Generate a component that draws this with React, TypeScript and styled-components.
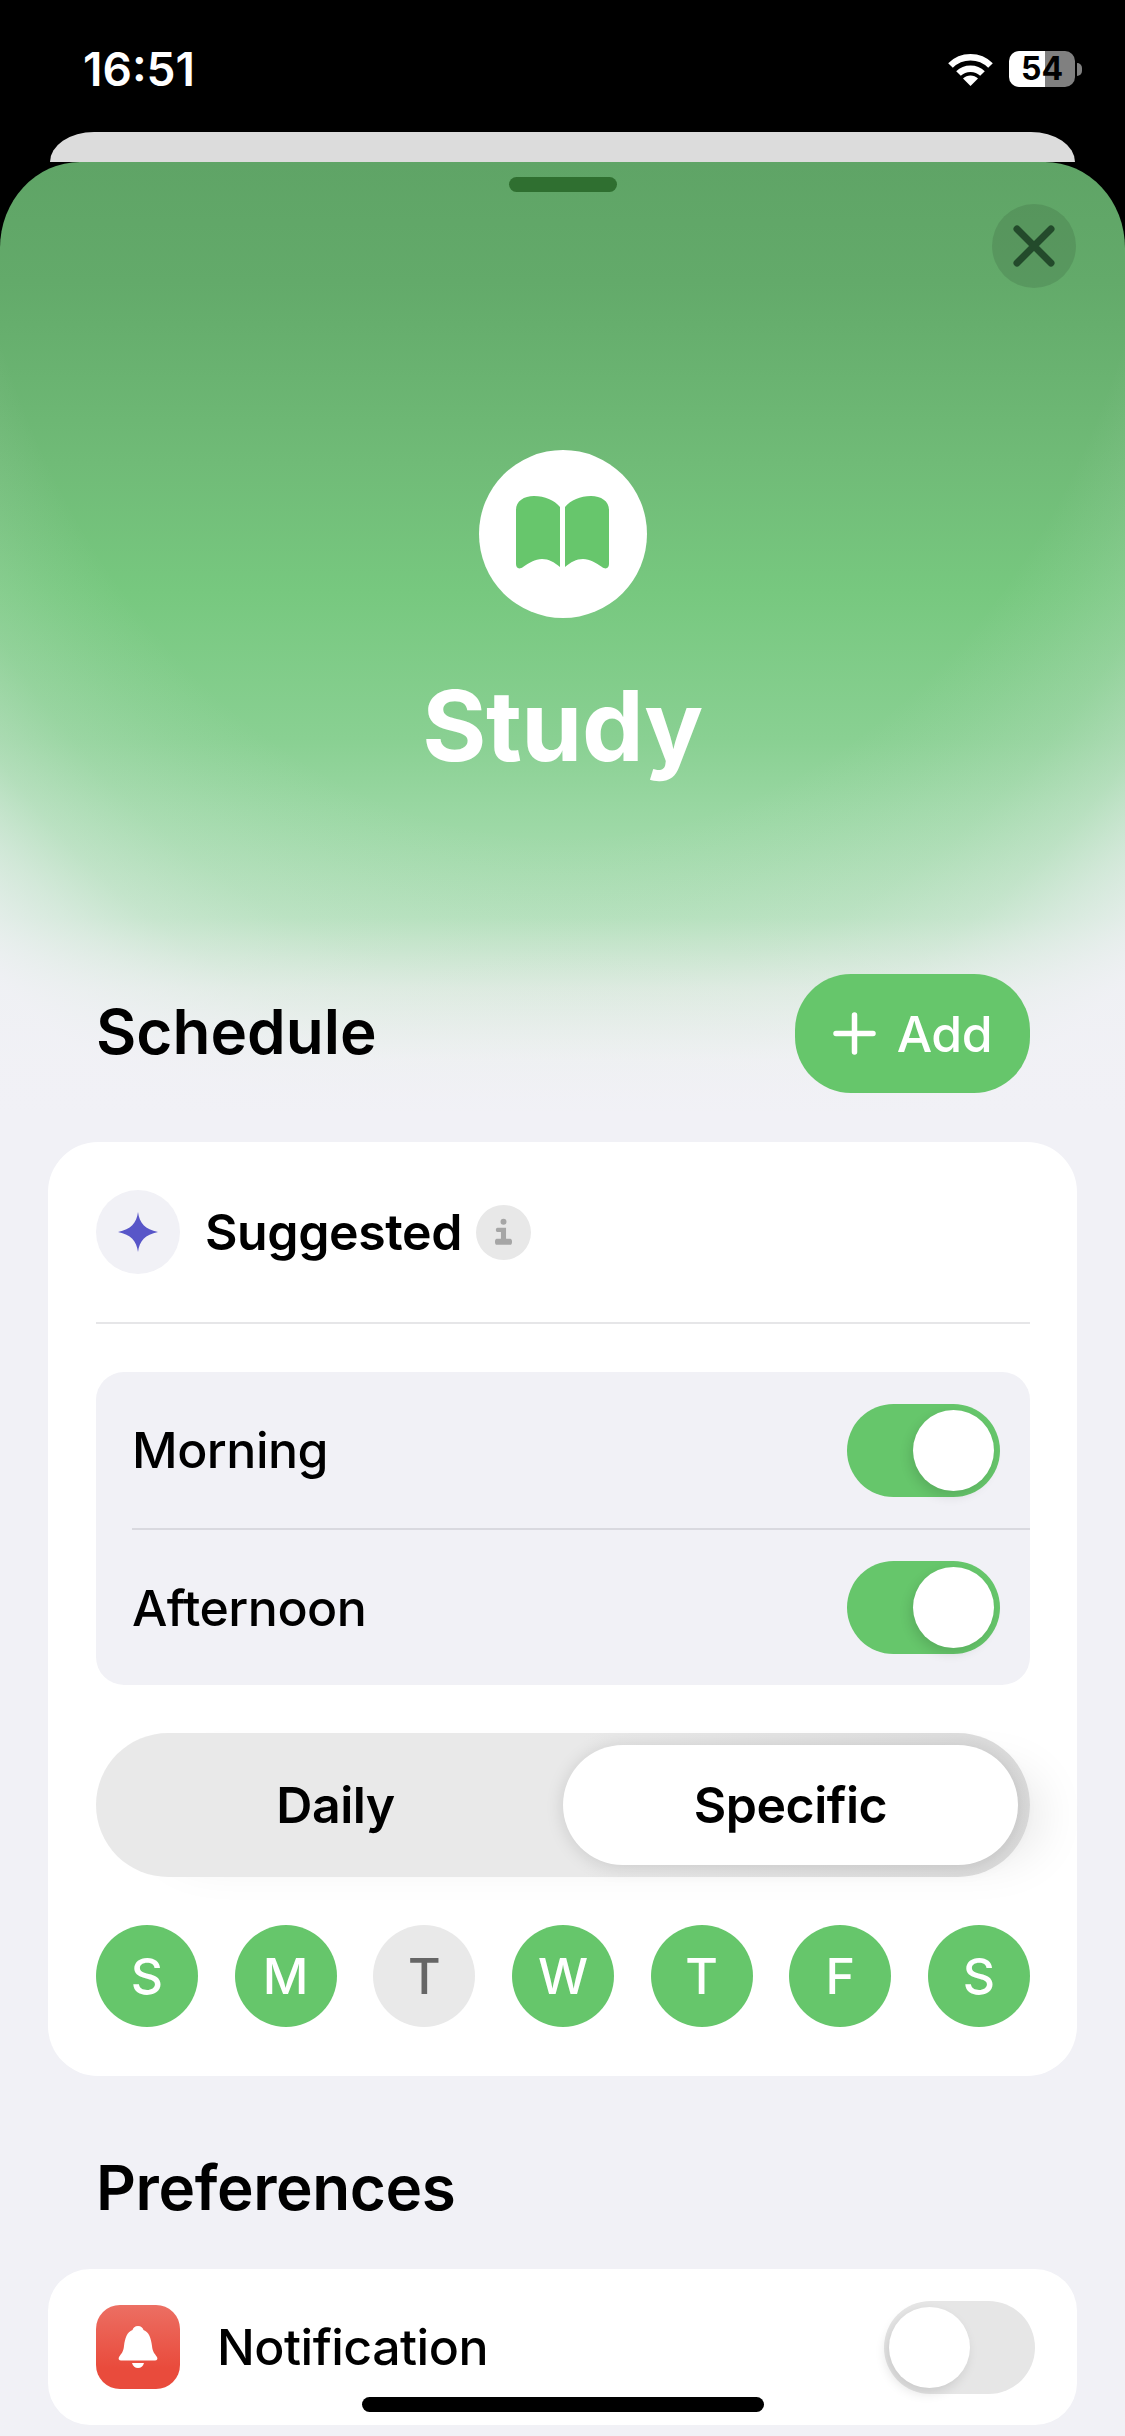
import * as React from "react";
import styled, { createGlobalStyle } from "styled-components";

const Global = createGlobalStyle`
	html, body {
		margin: 0;
		padding: 0;
		background: #000;
	}
	* {
		box-sizing: border-box;
	}
`;

const Phone = styled.div`
	position: relative;
	width: 1125px;
	height: 2436px;
	overflow: hidden;
	background: #000;
	font-family: Inter, "Liberation Sans", sans-serif;
	color: #000;
`;

const StatusBar = styled.div`
	height: 132px;
	padding: 51px 43px 0 83px;
	display: flex;
	justify-content: space-between;
	align-items: flex-start;
	color: #fff;
`;
const Time = styled.span`
	font-size: 46px;
	line-height: 36px;
	font-weight: 600;
`;
const StatusIcons = styled.div`
	display: flex;
	align-items: center;
	gap: 16px;
`;
const Battery = styled.div`
	display: flex;
	align-items: center;
	gap: 2px;
`;
const BatteryBody = styled.div`
	width: 66px;
	height: 36px;
	border-radius: 10px;
	background: linear-gradient(90deg, #fff 55%, #808080 55%);
	color: #000;
	font-size: 32px;
	line-height: 36px;
	font-weight: 700;
	text-align: center;
`;
const BatteryNub = styled.div`
	width: 5px;
	height: 13px;
	border-radius: 0 6px 6px 0;
	background: #808080;
`;

const BackSheet = styled.div`
	height: 30px;
	margin: 0 50px;
	background: #dcdcdc;
	border-radius: 50px 50px 0 0 / 34px 34px 0 0;
`;

const Sheet = styled.div`
	height: 2274px;
	display: flex;
	flex-direction: column;
	border-radius: 80px 80px 0 0 / 86px 86px 0 0;
	background:
		radial-gradient(
			ellipse 910px 1170px at 50% -100px,
			transparent 66%,
			rgba(241, 241, 246, 0.07) 72%,
			rgba(241, 241, 246, 0.17) 79%,
			rgba(241, 241, 246, 0.35) 86%,
			rgba(241, 241, 246, 0.58) 91%,
			rgba(241, 241, 246, 0.78) 96%,
			rgba(241, 241, 246, 0.92) 100%
		),
		linear-gradient(
			180deg,
			#5fa466 0px,
			#63aa6a 120px,
			#70bb77 300px,
			#77c87f 430px,
			#89d092 576px,
			#99d7a2 648px,
			#b0dfb8 755px,
			#d8e9db 826px,
			#edf0f0 898px,
			#f1f1f6 950px
		);
`;
const Handle = styled.div`
	width: 108px;
	height: 15px;
	margin-top: 15px;
	align-self: center;
	border-radius: 8px;
	background: #2f6f30;
`;
const CloseButton = styled.div`
	width: 84px;
	height: 84px;
	margin: 12px 49px 0 0;
	align-self: flex-end;
	border-radius: 50%;
	background: rgba(0, 0, 0, 0.1);
	display: flex;
	align-items: center;
	justify-content: center;
`;
const BookBadge = styled.div`
	width: 168px;
	height: 168px;
	margin-top: 162px;
	align-self: center;
	border-radius: 50%;
	background: #fff;
	display: flex;
	align-items: center;
	justify-content: center;
	padding-bottom: 3px;
`;
const Title = styled.h1`
	margin: 53px 0 0;
	font-size: 98px;
	line-height: 110px;
	font-weight: 700;
	letter-spacing: -0.5px;
	color: #fff;
	text-align: center;
`;

const SectionHeader = styled.div`
	margin: 193px 95px 49px 96px;
	display: flex;
	justify-content: space-between;
	align-items: center;
`;
const SectionTitle = styled.h2`
	margin: 0 0 3px;
	font-size: 62px;
	line-height: 72px;
	font-weight: 600;
`;
const PreferencesTitle = styled(SectionTitle)`
	margin: 76px 0 45px 96px;
	letter-spacing: -0.4px;
`;
const AddButton = styled.div`
	width: 235px;
	height: 119px;
	border-radius: 56px;
	background: #66c66b;
	color: #fff;
	font-size: 50px;
	font-weight: 500;
	letter-spacing: -0.5px;
	display: flex;
	align-items: center;
	justify-content: center;
	gap: 21px;
`;

const Card = styled.div`
	margin: 0 48px;
	padding: 48px 47px 49px 48px;
	border-radius: 50px;
	background: #fff;
	display: flex;
	flex-direction: column;
	gap: 48px;
`;
const SuggestedRow = styled.div`
	display: flex;
	align-items: center;
`;
const SparkBadge = styled.div`
	width: 84px;
	height: 84px;
	border-radius: 50%;
	background: #f1f1f6;
	display: flex;
	align-items: center;
	justify-content: center;
`;
const SuggestedLabel = styled.span`
	margin: 0 14px 0 25px;
	font-size: 50px;
	line-height: 60px;
	font-weight: 600;
	letter-spacing: -0.4px;
`;
const InfoBadge = styled.div`
	width: 55px;
	height: 55px;
	border-radius: 50%;
	background: #e8e8e8;
	display: flex;
	align-items: center;
	justify-content: center;
`;
const Divider = styled.div`
	height: 2px;
	background: #e6e6e8;
`;

const Group = styled.div`
	border-radius: 28px;
	background: #f1f1f6;
`;
const GroupRow = styled.div<{ $divided?: boolean }>`
	height: ${(p) => (p.$divided ? 157 : 156)}px;
	margin-left: 36px;
	padding-right: 30px;
	display: flex;
	align-items: center;
	justify-content: space-between;
	border-top: ${(p) => (p.$divided ? "2px solid #d9d9df" : "none")};
`;
const RowLabel = styled.span`
	font-size: 50px;
	line-height: 60px;
	font-weight: 500;
	letter-spacing: -0.5px;
`;

const ToggleTrack = styled.div<{ $on: boolean }>`
	width: ${(p) => (p.$on ? 153 : 151)}px;
	height: 93px;
	padding: ${(p) => (p.$on ? "6px" : "6px 5px")};
	border-radius: 47px;
	display: flex;
	justify-content: ${(p) => (p.$on ? "flex-end" : "flex-start")};
	background: ${(p) => (p.$on ? "#66c66b" : "#e6e6e6")};
`;
const ToggleKnob = styled.div`
	width: 81px;
	height: 81px;
	border-radius: 50%;
	background: #fff;
	box-shadow: -3px 5px 12px rgba(0, 0, 0, 0.12);
`;

const Segments = styled.div`
	height: 144px;
	padding: 12px;
	border-radius: 72px;
	background: linear-gradient(90deg, #e9e9e9 52%, #dedede 90%, #dadada 100%);
	box-shadow: 40px 10px 50px -30px rgba(0, 0, 0, 0.1);
	display: flex;
	align-items: stretch;
	font-size: 50px;
	font-weight: 600;
	letter-spacing: -0.5px;
`;
const Segment = styled.div<{ $active?: boolean }>`
	display: flex;
	align-items: center;
	justify-content: center;
	border-radius: 60px;
	flex: ${(p) => (p.$active ? "0 0 455px" : "1")};
	background: ${(p) => (p.$active ? "#fff" : "transparent")};
	box-shadow: ${(p) => (p.$active ? "0 2px 18px rgba(0, 0, 0, 0.13)" : "none")};
`;

const Days = styled.div`
	display: flex;
	justify-content: space-between;
`;
const Day = styled.div<{ $on: boolean }>`
	width: 102px;
	height: 102px;
	border-radius: 50%;
	display: flex;
	align-items: center;
	justify-content: center;
	font-size: 50px;
	font-weight: 500;
	background: ${(p) => (p.$on ? "#66c66b" : "#e9e9e9")};
	color: ${(p) => (p.$on ? "#fff" : "#666")};
`;

const PrefCard = styled.div`
	height: 156px;
	margin: 0 48px;
	padding: 0 42px 0 48px;
	border-radius: 42px;
	background: #fff;
	display: flex;
	align-items: center;
	justify-content: space-between;
`;
const PrefLeft = styled.div`
	display: flex;
	align-items: center;
	gap: 37px;
`;
const BellIcon = styled.div`
	width: 84px;
	height: 84px;
	border-radius: 24px;
	background: linear-gradient(180deg, #ec6f63, #e94b3c 75%);
	display: flex;
	align-items: center;
	justify-content: center;
`;

const HomeIndicator = styled.div`
	position: absolute;
	left: 362px;
	bottom: 24px;
	width: 402px;
	height: 15px;
	border-radius: 8px;
	background: #000;
`;

const days = [
	{ label: "S", on: true },
	{ label: "M", on: true },
	{ label: "T", on: false },
	{ label: "W", on: true },
	{ label: "T", on: true },
	{ label: "F", on: true },
	{ label: "S", on: true },
];

const Toggle = ({ on }: { on: boolean }) => (
	<ToggleTrack $on={on}>
		<ToggleKnob />
	</ToggleTrack>
);

const WifiGlyph = () => (
	<svg width="45" height="33" viewBox="0 0 45 33" fill="none" stroke="#fff" strokeWidth="6.5">
		<path d="M2.5 12.5C13.5 1.5 31.5 1.5 42.5 12.5" />
		<path d="M10.5 20.5C17 14 28 14 34.5 20.5" />
		<path d="M22.5 33L15 25.5C19 21.5 26 21.5 30 25.5Z" fill="#fff" stroke="none" />
	</svg>
);

const BookGlyph = () => {
	const page = "M44 11C38 4 29 0 18 0C8 0 0 5 0 14V68C0 72 3 74 7 71C13 67 19 63 26 63C33 63 38 66 44 71Z";
	return (
		<svg width="93" height="73" viewBox="0 0 93 73" fill="#67c66c">
			<path d={page} />
			<path d={page} transform="translate(93 0) scale(-1 1)" />
		</svg>
	);
};

export default function App() {
	return (
		<Phone>
			<Global />
			<StatusBar>
				<Time>16:51</Time>
				<StatusIcons>
					<WifiGlyph />
					<Battery>
						<BatteryBody>54</BatteryBody>
						<BatteryNub />
					</Battery>
				</StatusIcons>
			</StatusBar>
			<BackSheet />
			<Sheet>
				<Handle />
				<CloseButton>
					<svg width="42" height="42" viewBox="0 0 42 42" stroke="#234a2b" strokeWidth="7" strokeLinecap="round">
						<path d="M4 4L38 38M38 4L4 38" />
					</svg>
				</CloseButton>
				<BookBadge>
					<BookGlyph />
				</BookBadge>
				<Title>Study</Title>

				<SectionHeader>
					<SectionTitle>Schedule</SectionTitle>
					<AddButton>
						<svg width="43" height="43" viewBox="0 0 43 43" stroke="#fff" strokeWidth="5.5" strokeLinecap="round">
							<path d="M21.5 3V40M3 21.5H40" />
						</svg>
						Add
					</AddButton>
				</SectionHeader>

				<Card>
					<SuggestedRow>
						<SparkBadge>
							<svg width="40" height="40" viewBox="0 0 40 40" fill="#5856c8">
								<path d="M20 0C21.5 11 27 17.5 40 20C27 22.5 21.5 29 20 40C18.5 29 13 22.5 0 20C13 17.5 18.5 11 20 0Z" />
							</svg>
						</SparkBadge>
						<SuggestedLabel>Suggested</SuggestedLabel>
						<InfoBadge>
							<svg width="17" height="30" viewBox="0 0 20 32" fill="#a6a6a6">
								<circle cx="10" cy="4" r="3.5" />
								<path d="M3 11H13V24H18C19 24 20 25 20 27V28C20 30 19 31 18 31H2C1 31 0 30 0 28V27C0 25 1 24 2 24H7V16H3C2 16 1 15 1 13.5C1 12 2 11 3 11Z" />
							</svg>
						</InfoBadge>
					</SuggestedRow>
					<Divider />
					<Group>
						<GroupRow>
							<RowLabel>Morning</RowLabel>
							<Toggle on />
						</GroupRow>
						<GroupRow $divided>
							<RowLabel>Afternoon</RowLabel>
							<Toggle on />
						</GroupRow>
					</Group>
					<Segments>
						<Segment>Daily</Segment>
						<Segment $active>Specific</Segment>
					</Segments>
					<Days>
						{days.map((d, i) => (
							<Day key={i} $on={d.on}>
								{d.label}
							</Day>
						))}
					</Days>
				</Card>

				<PreferencesTitle>Preferences</PreferencesTitle>
				<PrefCard>
					<PrefLeft>
						<BellIcon>
							<svg width="40" height="43" viewBox="0 0 40 43" fill="#fff">
								<path d="M20 0C23 0 25 2 25.5 4C31 6 33 12 34 20C34.5 26 37 28 39 31C40 33 39 34.5 37 34.5H3C1 34.5 0 33 1 31C3 28 5.5 26 6 20C7 12 9 6 14.5 4C15 2 17 0 20 0Z" />
								<path d="M14 37H26C25 40.5 23 42 20 42C17 42 15 40.5 14 37Z" />
							</svg>
						</BellIcon>
						<RowLabel>Notification</RowLabel>
					</PrefLeft>
					<Toggle on={false} />
				</PrefCard>
			</Sheet>
			<HomeIndicator />
		</Phone>
	);
}
